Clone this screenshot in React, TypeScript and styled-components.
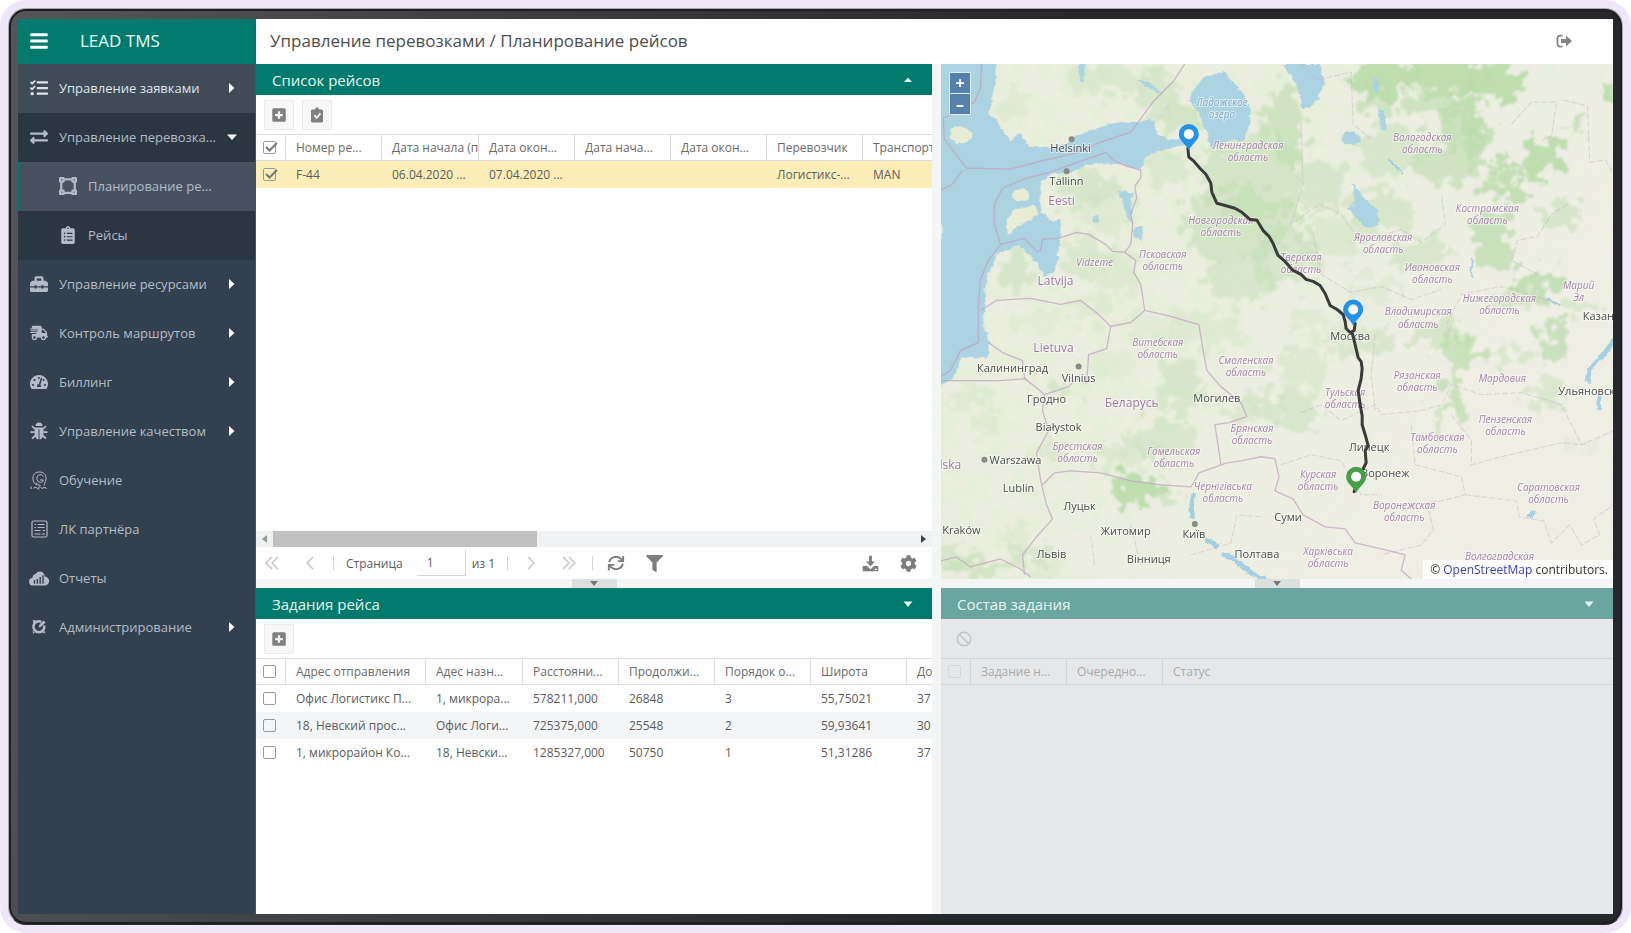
import React from "react";
import styled, { createGlobalStyle, css } from "styled-components";
import {
  FaBars,
  FaTasks,
  FaExchangeAlt,
  FaVectorSquare,
  FaClipboardList,
  FaToolbox,
  FaShippingFast,
  FaTachometerAlt,
  FaFilter,
  FaCog,
} from "react-icons/fa";

const GREEN = "#007a6c";

const GlobalStyle = createGlobalStyle`
  * { box-sizing: border-box; }
  body {
    margin: 0;
    background: #fff;
    font-family: "Open Sans", "Noto Sans", sans-serif;
    font-size: 12px;
    color: #555;
  }
  button, input { font: inherit; color: inherit; }
`;

/* ---------- shell ---------- */

const Halo = styled.div`
  height: 100vh;
  min-height: 800px;
  padding: 8px;
  background: #efe7f8;
  border-radius: 26px;
`;

const Bezel = styled.div`
  height: 100%;
  padding: 10px 9px;
  border: 1px solid #a9a7ad;
  border-bottom-color: #2a2b2d;
  border-radius: 18px;
  background: linear-gradient(100deg, #55565a 0, #3c3d40 30%, #26282b 60%);
  box-shadow: inset 0 0 0 2px #1d1e20;
`;

const Screen = styled.div`
  display: flex;
  height: 100%;
  overflow: hidden;
  background: #f4f6f6;
`;

/* ---------- sidebar ---------- */

const Sidebar = styled.aside`
  flex: 0 0 238px;
  min-width: 0;
  display: flex;
  flex-direction: column;
  background: #33404d;
  border-right: 1px solid #48525d;
`;

const Brand = styled.div`
  display: flex;
  align-items: center;
  height: 45px;
  padding: 0 0 2px 11px;
  gap: 31px;
  background: ${GREEN};
  color: #e9fffb;
  font-size: 17px;
`;

const MenuToggle = styled.button`
  display: flex;
  padding: 0;
  border: 0;
  background: none;
  color: #fff;
  font-size: 20px;
`;

const NavList = styled.ul`
  margin: 0;
  padding: 0;
  list-style: none;
`;

const NavLink = styled.a<{ $tone?: "hover" | "open" | "active"; $nested?: boolean }>`
  display: flex;
  align-items: center;
  gap: 10px;
  height: 49px;
  padding: 0 17px 1px ${(p) => (p.$nested ? 40 : 11)}px;
  color: #b3bcc6;
  font-size: 13px;
  text-decoration: none;
  white-space: nowrap;
  ${(p) => p.$tone === "hover" && css`background: #3f4b57; color: #dfe5ea;`}
  ${(p) => p.$tone === "open" && css`background: #2b3643;`}
  ${(p) => p.$tone === "active" && css`background: #465260; box-shadow: inset 1px 0 0 ${GREEN};`}
`;

const NavIcon = styled.span`
  display: flex;
  justify-content: center;
  flex: 0 0 20px;
  font-size: 18px;
`;

const NavText = styled.span`
  flex: 1;
  min-width: 0;
`;

const Caret = styled.svg`
  flex: 0 0 12px;
  height: 12px;
  fill: #fff;
`;

/* ---------- main area ---------- */

const Main = styled.main`
  flex: 1;
  min-width: 0;
  display: flex;
  flex-direction: column;
`;

const TopBar = styled.header`
  display: flex;
  align-items: center;
  justify-content: space-between;
  height: 45px;
  padding: 0 40px 2px 14px;
  background: #fff;
`;

const Crumbs = styled.h1`
  margin: 0;
  color: #4e4e4e;
  font-size: 17px;
  font-weight: 400;
`;

const IconButton = styled.button`
  display: flex;
  align-items: center;
  justify-content: center;
  padding: 0;
  border: 0;
  background: none;
  color: #858585;
  font-size: 17px;
`;

const Workspace = styled.div`
  flex: 1;
  min-height: 0;
  display: grid;
  grid-template-columns: minmax(0, 676fr) minmax(0, 672fr);
  grid-template-rows: minmax(0, 515fr) 9px minmax(0, 326fr);
  column-gap: 9px;
`;

const Panel = styled.section<{ $muted?: boolean }>`
  display: flex;
  flex-direction: column;
  min-width: 0;
  background: ${(p) => (p.$muted ? "#e6e7e9" : "#fff")};
  color: ${(p) => (p.$muted ? "#a9abad" : "#5c5c5c")};
  overflow: hidden;
`;

const PanelHeader = styled.div<{ $muted?: boolean }>`
  display: flex;
  align-items: center;
  justify-content: space-between;
  flex: 0 0 31px;
  padding: 0 18px 0 16px;
  background: ${(p) => (p.$muted ? "#6ba59f" : GREEN)};
  color: #e6f6f3;
`;

const PanelTitle = styled.h2`
  margin: 0;
  font-size: 15px;
  font-weight: 400;
`;

const Collapse = styled.button<{ $muted?: boolean }>`
  display: flex;
  padding: 0;
  border: 0;
  background: none;
  color: inherit;
  svg { width: 12px; height: 12px; fill: currentColor; }
`;

const Toolbar = styled.div`
  display: flex;
  align-items: center;
  gap: 8px;
  flex: 0 0 39px;
  padding: 0 8px;
`;

const Tool = styled.button<{ $flat?: boolean }>`
  display: flex;
  align-items: center;
  justify-content: center;
  width: 30px;
  height: 30px;
  padding: 0;
  border: 1px solid ${(p) => (p.$flat ? "transparent" : "#ececec")};
  background: ${(p) => (p.$flat ? "none" : "#f7f7f7")};
  color: ${(p) => (p.$flat ? "#c4c5c7" : "#808080")};
  svg { width: 18px; height: 18px; fill: currentColor; }
`;

const GridArea = styled.div`
  flex: 1;
  min-height: 0;
  overflow: hidden;
`;

const Grid = styled.table<{ $muted?: boolean; $width: string }>`
  width: ${(p) => p.$width};
  table-layout: fixed;
  border-collapse: separate;
  border-spacing: 0;
  th, td {
    height: 27px;
    padding: 0 0 0 10px;
    overflow: hidden;
    text-align: left;
    font-weight: 400;
    white-space: nowrap;
  }
  th {
    border: solid ${(p) => (p.$muted ? "#d3d4d6" : "#dedede")};
    border-width: 1px 1px 1px 0;
    color: ${(p) => (p.$muted ? "#a9abad" : "#6a6a6a")};
  }
  th:first-child, td:first-child { padding: 0 0 0 7px; }
  th:last-child { border-right: 0; }
`;

const Row = styled.tr<{ $tone?: "selected" | "striped" }>`
  background: ${(p) =>
    p.$tone === "selected" ? "#fdedb9" : p.$tone === "striped" ? "#f4f5f6" : "#fff"};
`;

const Check = styled.input<{ $faint?: boolean }>`
  appearance: none;
  display: block;
  width: 13px;
  height: 13px;
  margin: 0;
  border: 1px solid ${(p) => (p.$faint ? "#d5d6d8" : "#999")};
  border-radius: 2px;
`;

const CheckCell = styled.label`
  display: grid;
  width: 16px;
  > * { grid-area: 1 / 1; }
  svg { width: 16px; height: 13px; fill: none; stroke: #777; stroke-width: 2; }
`;

const ScrollTrack = styled.div`
  display: flex;
  align-items: stretch;
  flex: 0 0 16px;
  background: #f0f1f2;
`;

const ScrollArrow = styled.button`
  display: flex;
  align-items: center;
  justify-content: center;
  width: 17px;
  padding: 0;
  border: 0;
  background: none;
  svg { width: 7px; height: 8px; }
`;

const ScrollThumb = styled.div`
  width: 39%;
  background: #c1c1c1;
`;

const Pager = styled.div`
  display: flex;
  align-items: center;
  flex: 0 0 32px;
  padding: 0 5px 0 8px;
`;

const PageButton = styled.button<{ $dark?: boolean }>`
  display: flex;
  align-items: center;
  justify-content: center;
  width: 38px;
  padding: 0;
  border: 0;
  background: none;
  color: ${(p) => (p.$dark ? "#7d7d7d" : "#c2c2c2")};
  font-size: 17px;
  &:first-child { width: 16px; margin-right: 11px; }
  svg.line { width: 16px; height: 14px; fill: none; stroke: currentColor; stroke-width: 1.4; }
`;

const Separator = styled.span`
  width: 1px;
  height: 14px;
  margin: 0 4px;
  background: #d4d4d4;
`;

const PageLabel = styled.label`
  display: flex;
  align-items: center;
  gap: 14px;
  padding: 0 6px 0 8px;
`;

const PageInput = styled.input`
  width: 49px;
  height: 26px;
  padding: 0 10px;
  border: solid #d8d8d8;
  border-width: 0 1px 1px 0;
  background: none;
  outline: none;
`;

const PageCount = styled.span`
  padding-right: 8px;
`;

const Spacer = styled.span`
  flex: 1;
`;

const Splitter = styled.div`
  display: flex;
  justify-content: center;
`;

const SplitHandle = styled.button`
  display: flex;
  align-items: center;
  justify-content: center;
  width: 45px;
  padding: 0;
  border: 0;
  background: #dcdfe0;
  svg { width: 8px; height: 5px; fill: #777; }
`;

/* ---------- map ---------- */

const MapPanel = styled.section`
  position: relative;
  overflow: hidden;
  background: #f0efe8;
`;

const MapCanvas = styled.svg`
  display: block;
  width: 100%;
  height: 100%;
`;

const ZoomControls = styled.div`
  position: absolute;
  top: 8px;
  left: 8px;
  display: flex;
  flex-direction: column;
  gap: 1px;
  padding: 1px;
  border-radius: 2px;
  background: rgba(255, 255, 255, 0.6);
`;

const ZoomButton = styled.button`
  width: 20px;
  height: 20px;
  padding: 0;
  border: 0;
  background: #5681ab;
  color: #fff;
  font-size: 16px;
  font-weight: 700;
  line-height: 18px;
`;

const Attribution = styled.div`
  position: absolute;
  right: 0;
  bottom: 0;
  padding: 0 5px 0 7px;
  background: rgba(255, 255, 255, 0.85);
  color: #333;
  font-size: 12px;
  line-height: 19px;
  a { color: #3a3fae; text-decoration: none; }
`;

const Triangle = ({ dir }: { dir: "up" | "down" }) => (
  <svg viewBox="0 0 12 12" aria-hidden="true">
    <path d={dir === "up" ? "M2 8 6 3.5 10 8z" : "M1.500 3.500h9L6 9z"} />
  </svg>
);

const Plus = () => (
  <svg viewBox="0 0 24 24" aria-hidden="true">
    <path
      fillRule="evenodd"
      d="M5 3h14a2 2 0 0 1 2 2v14a2 2 0 0 1-2 2H5a2 2 0 0 1-2-2V5a2 2 0 0 1 2-2zm5.500 4v3.500H7v3h3.500V17h3v-3.500H17v-3h-3.500V7z"
    />
  </svg>
);

const ClipCheck = () => (
  <svg viewBox="0 0 24 24" aria-hidden="true">
    <path
      fillRule="evenodd"
      d="M6 4.500h3L12 1l3 3.500h3a2 2 0 0 1 2 2V20a2 2 0 0 1-2 2H6a2 2 0 0 1-2-2V6.500a2 2 0 0 1 2-2zM7.500 13l4 4.500 6-7-1.800-1.600-4.200 5-2.200-2.500z"
    />
  </svg>
);

const Ban = () => (
  <svg viewBox="0 0 24 24" aria-hidden="true">
    <g fill="none" stroke="currentColor" strokeWidth="2">
      <circle cx="12" cy="12" r="9" />
      <path d="M6 6l12 12" />
    </g>
  </svg>
);

const Refresh = () => (
  <svg width="18" height="18" viewBox="0 0 24 24" fill="none" stroke="currentColor" strokeWidth="2.600" aria-hidden="true">
    <path d="M3 11a9 8.500 0 0 1 15.500-4.500L21 9M21 13a9 8.500 0 0 1-15.500 4.500L3 15" />
    <path d="M21.500 2.500V9.500H14.500M2.500 21.500V14.500H9.500" />
  </svg>
);

const Download = () => (
  <svg width="17" height="17" viewBox="0 0 24 24" fill="currentColor" aria-hidden="true">
    <path d="M10 1h4v8h4.500L12 16 5.500 9H10z" />
    <path fillRule="evenodd" d="M1 15.500h6l5 4.500 5-4.500h6V23H1zm17 4v1.500h3v-1.500z" />
  </svg>
);

const Exit = () => (
  <svg width="17" height="14" viewBox="0 0 34 28" aria-hidden="true">
    <path d="M13 3H8q-5 0-5 5v12q0 5 5 5h5" fill="none" stroke="currentColor" strokeWidth="3.500" />
    <path d="M10 10h10V3l12 11-12 11v-7H10z" fill="currentColor" />
  </svg>
);

const Bug = () => (
  <svg width="18" height="18" viewBox="0 0 36 36" aria-hidden="true">
    <path d="M11 8a7 7 0 0 1 14 0z" fill="currentColor" />
    <path d="M9 11h18v12q-1 11-8 12V15h-2v20q-7-1-8-12z" fill="currentColor" />
    <path d="M10 14 4 8M26 14l6-6M9 20H1M27 20h8M11 27l-7 6M25 27l7 6" stroke="currentColor" strokeWidth="3.500" fill="none" />
  </svg>
);

const Learning = () => (
  <svg width="18" height="19" viewBox="0 0 36 38" fill="none" stroke="currentColor" strokeWidth="2" aria-hidden="true">
    <path d="M14 28C7 25 6 20 6 14 6 6 11 2 19 2s13 5 13 12-3 9-4 15" />
    <path d="M27 11q-4-6-10-3-5 4-3 9 2 6 7 6 5-1 6-5h-7M12 23q3 6 9 6" />
    <path d="M2 36v-5M7 35l3-3 5 3 5-4 4 4 6-3 3 4M16 36h3" />
  </svg>
);

const Cabinet = () => (
  <svg width="17" height="18" viewBox="0 0 34 36" fill="none" stroke="currentColor" strokeWidth="2.400" aria-hidden="true">
    <rect x="2" y="2" width="30" height="32" rx="3" />
    <path d="M7 9h3M13 9h14M7 15h3M13 15h14M7 21h12M24 21h4M7 28h12M22 28h6" />
  </svg>
);

const CloudBars = () => (
  <svg width="20" height="16" viewBox="0 0 42 34" aria-hidden="true">
    <path
      fillRule="evenodd"
      fill="currentColor"
      d="M9 33a8 8 0 0 1-2-16A11 10 0 0 1 14 8 10 9 0 0 1 32 9q1 2 1 5a9.500 9.500 0 0 1 0 19zM10 22v7h3v-7zm6-3v10h3V19zm6-4v14h3V15zm6-4v18h3V11z"
    />
  </svg>
);

const Admin = () => (
  <svg width="16" height="16" viewBox="0 0 32 32" aria-hidden="true">
    <path
      d="M26.500 13a11 11 0 1 1-6-7.500"
      fill="none"
      stroke="currentColor"
      strokeWidth="5"
    />
    <path d="M15 17 17 11 25 3l4 4-8 8zM3 3l7-1-4 8zM26 23l3 4-6 2zM3 23l5 5-4 1z" fill="currentColor" />
  </svg>
);

type Tone = "hover" | "open" | "active";
interface NavEntry {
  text: string;
  icon: React.ReactNode;
  caret?: "right" | "down";
  tone?: Tone;
  nested?: boolean;
}

const nav: NavEntry[] = [
  { text: "Управление заявками", icon: <FaTasks />, caret: "right", tone: "hover" },
  { text: "Управление перевозка...", icon: <FaExchangeAlt />, caret: "down", tone: "open" },
  { text: "Планирование ре...", icon: <FaVectorSquare />, tone: "active", nested: true },
  { text: "Рейсы", icon: <FaClipboardList />, tone: "open", nested: true },
  { text: "Управление ресурсами", icon: <FaToolbox />, caret: "right" },
  { text: "Контроль маршрутов", icon: <FaShippingFast />, caret: "right" },
  { text: "Биллинг", icon: <FaTachometerAlt />, caret: "right" },
  { text: "Управление качеством", icon: <Bug />, caret: "right" },
  { text: "Обучение", icon: <Learning /> },
  { text: "ЛК партнёра", icon: <Cabinet /> },
  { text: "Отчеты", icon: <CloudBars /> },
  { text: "Администрирование", icon: <Admin />, caret: "right" },
];

function Tick({ label, checked, faint }: { label: string; checked?: boolean; faint?: boolean }) {
  return (
    <CheckCell>
      <Check type="checkbox" aria-label={label} defaultChecked={checked} disabled={faint} $faint={faint} />
      {checked && (
        <svg viewBox="0 0 16 13" aria-hidden="true">
          <path d="M3 6l3.500 3.500L14 2" />
        </svg>
      )}
    </CheckCell>
  );
}

interface DataGridProps {
  columns: string[];
  widths: number[];
  rows?: string[][];
  checked?: boolean;
  muted?: boolean;
  fill?: boolean;
}

function DataGrid({ columns, widths, rows = [], checked, muted, fill }: DataGridProps) {
  const total = 30 + widths.reduce((a, b) => a + b, 0);
  return (
    <GridArea>
      <Grid $muted={muted} $width={fill ? "100%" : `${total}px`}>
        <colgroup>
          <col width={30} />
          {widths.map((w, i) => (
            <col key={i} width={fill && i === widths.length - 1 ? undefined : w} />
          ))}
        </colgroup>
        <thead>
          <tr>
            <th>
              <Tick label="Выбрать все" checked={checked} faint={muted} />
            </th>
            {columns.map((c, i) => (
              <th key={i}>{c}</th>
            ))}
          </tr>
        </thead>
        <tbody>
          {rows.map((r, n) => (
            <Row key={n} $tone={checked ? "selected" : n % 2 ? "striped" : undefined}>
              <td>
                <Tick label={r[0]} checked={checked} />
              </td>
              {r.map((v, i) => (
                <td key={i}>{v}</td>
              ))}
            </Row>
          ))}
        </tbody>
      </Grid>
    </GridArea>
  );
}

/* ---------- map data ---------- */

type Kind = "region" | "city" | "country" | "water";
const places: [number, number, Kind, string, string?][] = [
  [130, 88, "city", "Helsinki"],
  [126, 121, "city", "Tallinn"],
  [121, 141, "country", "Eesti"],
  [115, 221, "country", "Latvija"],
  [154, 202, "region", "Vidzeme"],
  [113, 287, "country", "Lietuva"],
  [72, 307, "city", "Калининград"],
  [138, 317, "city", "Vilnius"],
  [106, 338, "city", "Гродно"],
  [191, 342, "country", "Беларусь"],
  [276, 337, "city", "Могилев"],
  [118, 366, "city", "Białystok"],
  [137, 385, "region", "Брестская", "область"],
  [75, 399, "city", "Warszawa"],
  [10, 404, "country", "lska"],
  [78, 427, "city", "Lublin"],
  [233, 390, "region", "Гомельская", "область"],
  [282, 425, "region", "Чернігівська", "область"],
  [139, 445, "city", "Луцьк"],
  [21, 469, "city", "Kraków"],
  [185, 470, "city", "Житомир"],
  [253, 473, "city", "Київ"],
  [111, 493, "city", "Львів"],
  [208, 498, "city", "Вінниця"],
  [316, 493, "city", "Полтава"],
  [347, 456, "city", "Суми"],
  [387, 490, "region", "Харківська", "область"],
  [558, 495, "region", "Волгоградская"],
  [377, 413, "region", "Курская", "область"],
  [463, 444, "region", "Воронежская", "область"],
  [444, 412, "city", "Воронеж"],
  [428, 386, "city", "Липецк"],
  [409, 275, "city", "Москва"],
  [607, 426, "region", "Саратовская", "область"],
  [496, 376, "region", "Тамбовская", "область"],
  [564, 358, "region", "Пензенская", "область"],
  [645, 330, "city", "Ульяновск"],
  [561, 317, "region", "Мордовия"],
  [476, 314, "region", "Рязанская", "область"],
  [404, 331, "region", "Тульская", "область"],
  [311, 367, "region", "Брянская", "область"],
  [305, 299, "region", "Смоленская", "область"],
  [217, 281, "region", "Витебская", "область"],
  [477, 251, "region", "Владимирская", "область"],
  [558, 238, "region", "Нижегородская", "область"],
  [637, 225, "region", "Марий", "Эл"],
  [660, 256, "city", "Казань"],
  [491, 207, "region", "Ивановская", "область"],
  [442, 177, "region", "Ярославская", "область"],
  [546, 148, "region", "Костромская", "область"],
  [481, 77, "region", "Вологодская", "область"],
  [307, 85, "region", "Ленинградская", "область"],
  [281, 42, "water", "Ладожское", "озеро"],
  [280, 160, "region", "Новгородская", "область"],
  [222, 194, "region", "Псковская", "область"],
  [360, 197, "region", "Тверская", "область"],
];

const MapText = styled.text<{ $kind: Kind }>`
  text-anchor: middle;
  paint-order: stroke;
  stroke: rgba(255, 255, 255, 0.5);
  stroke-width: 2px;
  font-size: ${(p) => (p.$kind === "country" ? 12 : p.$kind === "city" ? 11 : 10)}px;
  font-style: ${(p) => (p.$kind === "region" || p.$kind === "water" ? "italic" : "normal")};
  fill: ${(p) =>
    p.$kind === "city" ? "#4c4c4c" : p.$kind === "water" ? "#7fa9cf" : p.$kind === "country" ? "#9f79a2" : "#a583a8"};
`;

/* wooded areas: centre x, centre y, radius x, radius y, density */
const forests: [number, number, number, number, number][] = [
  [165, 16, 38, 16, 0.7], [215, 30, 22, 20, 0.8], [240, 55, 22, 18, 0.9], [310, 110, 50, 45, 0.9],
  [345, 60, 20, 40, 1], [225, 105, 22, 18, 0.7], [300, 160, 60, 34, 0.9], [345, 190, 34, 30, 0.8],
  [300, 215, 38, 24, 0.8], [150, 125, 36, 16, 0.8], [165, 150, 30, 18, 0.6], [75, 205, 18, 20, 0.8],
  [145, 195, 26, 22, 0.7], [180, 210, 18, 20, 0.6], [72, 40, 16, 14, 0.6], [440, 12, 30, 20, 1.3],
  [438, 36, 16, 18, 1], [500, 10, 40, 22, 1.3], [550, 18, 30, 20, 1.3], [495, 42, 36, 12, 1],
  [520, 62, 20, 28, 1.1], [500, 100, 30, 20, 1], [450, 85, 36, 24, 0.8], [535, 75, 12, 34, 1.1],
  [600, 95, 18, 20, 1.4], [562, 104, 18, 8, 1.2], [560, 125, 22, 12, 1.2], [635, 65, 6, 7, 1.1],
  [668, 25, 8, 10, 1.2], [620, 150, 20, 14, 0.9], [552, 175, 20, 34, 1.1], [598, 218, 26, 14, 1.2],
  [575, 235, 26, 8, 0.9], [640, 240, 20, 8, 0.8], [480, 190, 30, 16, 0.8], [440, 150, 34, 22, 0.8],
  [380, 120, 26, 26, 0.8], [395, 175, 30, 24, 0.7], [500, 270, 28, 14, 0.9], [520, 285, 18, 18, 1.1],
  [512, 325, 9, 26, 1.1], [500, 355, 6, 16, 1], [612, 275, 10, 22, 1.1], [605, 330, 20, 18, 0.8],
  [565, 292, 26, 5, 0.8], [420, 280, 36, 14, 0.8], [362, 300, 30, 20, 0.7], [355, 345, 20, 24, 0.8],
  [325, 340, 20, 14, 0.8], [240, 320, 20, 30, 0.8], [220, 375, 36, 18, 0.8], [195, 425, 26, 18, 1.3],
  [225, 425, 18, 10, 0.9], [185, 390, 40, 10, 0.7], [125, 325, 12, 10, 0.8], [105, 385, 14, 8, 0.7],
  [30, 335, 24, 10, 0.6], [48, 360, 12, 10, 0.6], [40, 502, 36, 8, 0.9], [90, 490, 22, 12, 0.8],
  [75, 470, 14, 10, 0.6], [10, 495, 14, 12, 0.8], [110, 505, 14, 10, 0.6], [170, 300, 22, 14, 0.5],
  [265, 265, 36, 20, 0.6], [215, 262, 26, 16, 0.5], [95, 255, 30, 10, 0.5], [155, 245, 24, 12, 0.6],
  [380, 260, 30, 12, 0.6], [430, 225, 26, 16, 0.6], [300, 350, 16, 12, 0.7], [640, 380, 20, 6, 0.5],
];

function RouteMap() {
  return (
    <MapCanvas viewBox="0 0 672 514" preserveAspectRatio="xMidYMid slice" role="img" aria-label="Карта маршрута">
      <defs>
        <filter id="rough" x="-5%" y="-5%" width="110%" height="110%">
          <feTurbulence type="fractalNoise" baseFrequency="0.07" numOctaves="5" seed="4" />
          <feDisplacementMap in="SourceGraphic" scale="48" xChannelSelector="R" yChannelSelector="G" />
          <feGaussianBlur stdDeviation="1" />
        </filter>
        <filter id="shore" x="-5%" y="-5%" width="110%" height="110%">
          <feTurbulence type="fractalNoise" baseFrequency="0.150" numOctaves="3" seed="9" />
          <feDisplacementMap in="SourceGraphic" scale="6" xChannelSelector="R" yChannelSelector="G" />
        </filter>
        <filter id="woods" x="0" y="0" width="100%" height="100%">
          <feTurbulence type="fractalNoise" baseFrequency="0.06" numOctaves="5" seed="21" />
          <feColorMatrix values="0 0 0 0 0.74  0 0 0 0 0.86  0 0 0 0 0.66  4 0 0 0 -1.800" />
        </filter>
        <linearGradient id="westFade" x1="0" x2="1" y1="0.2" y2="0.8">
          <stop offset="0.400" stopColor="#fff" />
          <stop offset="0.800" stopColor="#333" />
        </linearGradient>
        <mask id="woodMask">
          <rect width="672" height="514" fill="url(#westFade)" />
        </mask>
      </defs>

      <rect width="672" height="514" fill="#f1efe8" />
      <g mask="url(#woodMask)">
        <rect width="672" height="514" fill="#e6ecd6" opacity="0.500" />
        <rect width="672" height="514" filter="url(#woods)" opacity="0.650" />
      </g>
      <g filter="url(#rough)" fill="#b9dba9">
        {forests.map(([x, y, rx, ry, o], i) => (
          <ellipse key={i} cx={x} cy={y} rx={rx} ry={ry} opacity={Math.min(0.9, o * o * 0.55)} />
        ))}
      </g>

      <g filter="url(#shore)" fill="#abd3e1">
        <path d="M-10-10H58L54 20 49 50 57 57 63 67 70 76 80 70 88 82 110 84 129 78 136 70 160 63 180 57 200 58 214 55 216 70 230 76 250 74 250 81 226 84 204 93 200 104 180 100 160 99 146 101 133 107 113 110 101 116 99 133 101 147 112 158 120 154 120 170 118 192 114 207 104 213 97 200 84 186 78 180 66 186 56 190 53 200 46 214 44 242 43 262 49 278 49 293 20 293 14 312 0 320H-10z" />
        <path d="M263 13 252 27 248 36 258 50 266 67 270 84 288 76 302 77 308 62 310 46 297 22 282 8z" />
        <path d="M341 0 355 20 362 44 368 44 376 36 384 20 380 0z" />
        <ellipse cx="410" cy="74" rx="9" ry="7" />
        <path d="M411 118 420 130 436 146 438 162 424 164 412 150 406 144 414 138z" />
        <path d="M178 127 193 127 190 143 193 160 186 152 182 143z" />
        <ellipse cx="197" cy="168" rx="5" ry="7" />
        <ellipse cx="155" cy="155" rx="3" ry="4" />
        <path d="M432 14h6v14h-5zM436 46h7l2 20h-5zM138 0h6v18h-4zM196 15l14 4 12 12-12-6z" />
      </g>
      <g filter="url(#shore)" fill="#e8ecd5">
        <ellipse cx="20" cy="71" rx="12" ry="8" />
        <ellipse cx="80" cy="131" rx="9" ry="6" />
        <path d="M66 156 72 146 94 142 97 150 84 158 72 166 67 170z" />
        <path d="M0 160H3L2 175H0z" />
      </g>
      <g filter="url(#shore)" fill="none" stroke="#a6cfe2" strokeWidth="4">
        <path d="M252 428 251 454M264 475l14 6M282 490l12 4 16 14 16 8" strokeWidth="5" />
        <path d="M672 276 660 292 648 304 646 318M658 330 656 345M587 452l8-5" />
        <path d="M446 95l16 14M530 194l1 20M606 234l12 8" strokeWidth="2" />
      </g>

      <g fill="none" stroke="#c3a3c4" strokeWidth="1.300" opacity="0.750" strokeLinejoin="round">
        <path d="M41 0 40 24 34 38 24 44 3 54 4 75 26 104 70 105 100 97 135 89 160 78 190 68 196 60 212 38 232 18 244 0" />
        <path d="M0 126 12 120 22 106M166 88 172 96 186 102 200 106 200 114 194 122 196 134 190 150 192 160 190 180 184 188 172 187 165 180 148 170 136 168 118 174 102 175 100 186 96 187 84 174 60 180 54 160 54 140 62 124 86 114 110 108 140 97 166 88" />
        <path d="M60 180 48 196 40 215 38 240 38 262 38 278 20 286 10 306 0 312M40 246 56 236 90 234 120 240 140 236 158 250 170 262 190 258 204 246 200 220 193 208 195 196 184 188" />
        <path d="M48 278 62 288 82 296 84 314 92 320 104 330 102 346 108 366 96 388 100 415 106 440 112 454 96 472 82 490 84 510" />
        <path d="M104 330 128 322 136 314 146 318 148 290 166 284 170 262M204 246 230 252 258 260 262 284 266 306 280 322 300 338 306 352 288 358 274 360 278 386 280 400" />
        <path d="M102 420 114 408 130 406 160 408 190 416 220 420 250 422 254 416 258 408 286 398 300 396 320 392 334 394 338 412 334 426 352 434 362 450 384 462 404 464 414 478 440 484 464 490 460 505 470 514" />
        <path d="M0 316 60 316 86 314M0 496 16 492 30 502 60 494 80 504 90 512" />
      </g>
      <g fill="none" stroke="#c8b4c6" strokeWidth="1" opacity="0.500" strokeDasharray="6 2">
        <path d="M360 0 376 16 410 8 412 60 430 75M360 60 362 120 350 160 378 140 400 150 420 178 460 165 480 178 504 160 500 130M372 170 380 210 410 228 440 222 470 235 500 225M570 60 590 38 615 38 610 72 600 76M622 36 646 42 648 98 664 96 672 110M626 140 610 150 596 172 576 176 570 196 600 212M505 260 520 230 560 222 620 240M360 348 380 340 400 356 434 340 440 350 480 346 500 340 510 320 540 330 580 328 620 340 640 380M510 350 530 376 530 400 560 392 590 385 620 378 640 380 672 366M434 270 430 310 434 346M470 360 474 400 520 412 524 430 500 436 486 438 492 465 480 480 440 490M524 430 575 436 578 452 602 456 610 478 628 460 640 480 658 470 652 454 672 440M340 400 370 390 400 396 420 430 440 430M250 490 290 478 296 450 320 452M150 470 154 500M190 460 200 500" />
      </g>

      <g fill="#8b8b85">
        <circle cx="131" cy="75" r="3" />
        <circle cx="126" cy="107" r="3" />
        <circle cx="138" cy="302" r="3" />
        <circle cx="44" cy="395" r="3" />
        <circle cx="254" cy="459" r="3" />
      </g>
      {places.map(([x, y, kind, first, second]) => (
        <MapText key={first + x} $kind={kind}>
          <tspan x={x} y={y}>{first}</tspan>
          {second && <tspan x={x} y={y + 12}>{second}</tspan>}
        </MapText>
      ))}

      <path
        d="M247 84 248 93 253 97 259 104 265 110 270 119 271 128 276 139 287 142 294 144 301 148 309 155 316 156 322 166 328 172 332 179 337 191 344 197 352 206 360 210 365 215 372 217 379 221 384 229 389 241 396 245 402 250 404 257 405 264 409 268 413 266 414 259M411 268 414 280 417 293 420 297 421 304 420 314 417 326 419 340 421 351 421 360 424 370 427 381 424 386 425 398 421 406 417 411 415 420 413 427"
        fill="none"
        stroke="#3b3b3b"
        strokeWidth="3"
        strokeLinejoin="round"
        strokeLinecap="round"
      />
      {[
        [248, 86, "#2492e6"],
        [412, 261, "#2492e6"],
        [415, 428, "#43a047"],
      ].map(([x, y, color]) => (
        <g key={String(x)} transform={`translate(${x} ${y})`}>
          <path d="M0 0C-3-6-10-10-10-16A10 10 0 0 1 10-16C10-10 3-6 0 0z" fill={String(color)} />
          <circle cy="-16" r="5" fill="#fff" />
        </g>
      ))}
    </MapCanvas>
  );
}

function SplitBar() {
  return (
    <Splitter>
      <SplitHandle aria-label="Свернуть панель">
        <svg viewBox="0 0 8 5" aria-hidden="true">
          <path d="M0 0h8L4 5z" />
        </svg>
      </SplitHandle>
    </Splitter>
  );
}

function Header({ title, dir, muted }: { title: string; dir: "up" | "down"; muted?: boolean }) {
  return (
    <PanelHeader $muted={muted}>
      <PanelTitle>{title}</PanelTitle>
      <Collapse aria-label="Свернуть">
        <Triangle dir={dir} />
      </Collapse>
    </PanelHeader>
  );
}

const chevrons = {
  first: "M8 1 2 7l6 6M14 1 8 7l6 6",
  prev: "M11 1 5 7l6 6",
  next: "M5 1l6 6-6 6",
  last: "M2 1l6 6-6 6M8 1l6 6-6 6",
};

function Step({ to, label }: { to: keyof typeof chevrons; label: string }) {
  return (
    <PageButton aria-label={label}>
      <svg className="line" viewBox="0 0 16 14" aria-hidden="true">
        <path d={chevrons[to]} />
      </svg>
    </PageButton>
  );
}

export default function App() {
  return (
    <>
      <GlobalStyle />
      <Halo>
        <Bezel>
          <Screen>
            <Sidebar>
              <Brand>
                <MenuToggle aria-label="Меню">
                  <FaBars />
                </MenuToggle>
                LEAD TMS
              </Brand>
              <nav>
                <NavList>
                  {nav.map((n) => (
                    <li key={n.text}>
                      <NavLink href="#" $tone={n.tone} $nested={n.nested}>
                        <NavIcon>{n.icon}</NavIcon>
                        <NavText>{n.text}</NavText>
                        {n.caret && (
                          <Caret viewBox="0 0 12 12" aria-hidden="true">
                            <path d={n.caret === "right" ? "M3 1 8.500 6 3 11z" : "M1 3.500h10L6 9z"} />
                          </Caret>
                        )}
                      </NavLink>
                    </li>
                  ))}
                </NavList>
              </nav>
            </Sidebar>
            <Main>
              <TopBar>
                <Crumbs>Управление перевозками / Планирование рейсов</Crumbs>
                <IconButton aria-label="Выйти">
                  <Exit />
                </IconButton>
              </TopBar>
              <Workspace>
                <Panel>
                  <Header title="Список рейсов" dir="up" />
                  <Toolbar>
                    <Tool aria-label="Добавить рейс"><Plus /></Tool>
                    <Tool aria-label="Подтвердить рейс"><ClipCheck /></Tool>
                  </Toolbar>
                  <DataGrid
                    checked
                    columns={["Номер ре...", "Дата начала (п", "Дата окон...", "Дата нача...", "Дата окон...", "Перевозчик", "Транспорт"]}
                    widths={[96, 97, 96, 96, 96, 96, 96]}
                    rows={[["F-44", "06.04.2020 ...", "07.04.2020 ...", "", "", "Логистикс-...", "MAN"]]}
                  />
                  <ScrollTrack>
                    <ScrollArrow aria-label="Прокрутить влево">
                      <svg viewBox="0 0 7 8" fill="#999" aria-hidden="true"><path d="M6 0v8L1 4z" /></svg>
                    </ScrollArrow>
                    <ScrollThumb />
                    <Spacer />
                    <ScrollArrow aria-label="Прокрутить вправо">
                      <svg viewBox="0 0 7 8" fill="#444" aria-hidden="true"><path d="M1 0v8l5-4z" /></svg>
                    </ScrollArrow>
                  </ScrollTrack>
                  <Pager>
                    <Step to="first" label="Первая страница" />
                    <Step to="prev" label="Предыдущая страница" />
                    <Separator />
                    <PageLabel>
                      Страница
                      <PageInput defaultValue="1" />
                    </PageLabel>
                    <PageCount>из 1</PageCount>
                    <Separator />
                    <Step to="next" label="Следующая страница" />
                    <Step to="last" label="Последняя страница" />
                    <Separator />
                    <PageButton $dark aria-label="Обновить"><Refresh /></PageButton>
                    <PageButton $dark aria-label="Фильтр"><FaFilter /></PageButton>
                    <Spacer />
                    <PageButton $dark aria-label="Скачать"><Download /></PageButton>
                    <PageButton $dark aria-label="Настройки"><FaCog /></PageButton>
                  </Pager>
                </Panel>

                <MapPanel>
                  <RouteMap />
                  <ZoomControls>
                    <ZoomButton aria-label="Приблизить">+</ZoomButton>
                    <ZoomButton aria-label="Отдалить">–</ZoomButton>
                  </ZoomControls>
                  <Attribution>
                    © <a href="#osm">OpenStreetMap</a> contributors.
                  </Attribution>
                </MapPanel>

                <SplitBar />
                <SplitBar />

                <Panel>
                  <Header title="Задания рейса" dir="down" />
                  <Toolbar>
                    <Tool aria-label="Добавить задание"><Plus /></Tool>
                  </Toolbar>
                  <DataGrid
                    columns={["Адрес отправления", "Адес назн...", "Расстояни...", "Продолжи...", "Порядок о...", "Широта", "Долгота"]}
                    widths={[140, 97, 96, 96, 96, 96, 96]}
                    rows={[
                      ["Офис Логистикс П...", "1, микрора...", "578211,000", "26848", "3", "55,75021", "37"],
                      ["18, Невский прос...", "Офис Логи...", "725375,000", "25548", "2", "59,93641", "30"],
                      ["1, микрорайон Ко...", "18, Невски...", "1285327,000", "50750", "1", "51,31286", "37"],
                    ]}
                  />
                </Panel>

                <Panel $muted>
                  <Header title="Состав задания" dir="down" muted />
                  <Toolbar>
                    <Tool $flat aria-label="Отменить задание"><Ban /></Tool>
                  </Toolbar>
                  <DataGrid muted fill columns={["Задание н...", "Очередно...", "Статус"]} widths={[96, 96, 200]} />
                </Panel>
              </Workspace>
            </Main>
          </Screen>
        </Bezel>
      </Halo>
    </>
  );
}
